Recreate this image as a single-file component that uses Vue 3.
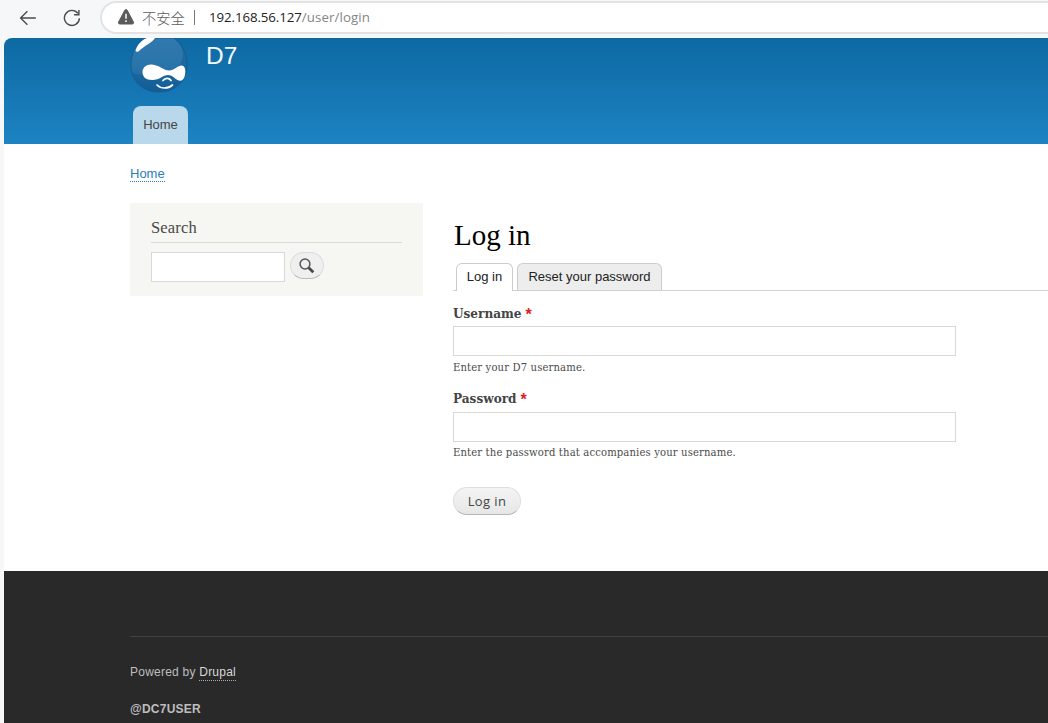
<script setup>
import { ref } from 'vue'

const search = ref('')
const fields = ref([
  { id: 'username', label: 'Username', type: 'text', hint: 'Enter your D7 username.', value: '' },
  { id: 'password', label: 'Password', type: 'password', hint: 'Enter the password that accompanies your username.', value: '' },
])
</script>

<template>
  <div class="window">
    <div class="toolbar">
      <svg class="back" width="18" height="18" viewBox="0 0 18 18">
        <path d="M16.8 9H1.6M8.4 2.3L1.6 9l6.8 6.7" />
      </svg>
      <svg class="reload" width="18" height="18" viewBox="0 0 18 18">
        <path d="M16.4 9.2A7.5 7.5 0 1 1 14.9 4.4M15.9 1v4.7h-4.8" />
      </svg>
      <div class="address">
        <svg class="warn" width="18" height="16" viewBox="0 0 18 16">
          <path d="M7.9 1.1Q9 .1 10.100 1.100L16.500 13.200Q16.800 15 15.300 15H2.700Q1.200 15 1.500 13.200Z" fill="#5b5b5b" stroke="#5b5b5b" />
          <path d="M9 4.700v5M9 11.300v1.700" stroke="#fff" stroke-width="1.500" />
        </svg>
        <span class="insecure">不安全</span>
        <span class="divider"></span>
        <span class="host">192.168.56.127</span><span class="path">/user/login</span>
      </div>
    </div>

    <div class="page">
      <header class="header">
        <div class="brand">
          <svg class="logo" width="58" height="56" viewBox="0 0 58 56">
            <defs>
              <linearGradient id="drop" x1="0" y1="0" x2="0" y2="1">
                <stop offset="0" stop-color="#3179ae" />
                <stop offset=".55" stop-color="#2874aa" />
                <stop offset="1" stop-color="#145f98" />
              </linearGradient>
            </defs>
            <path d="M15 0H44C52 6 57 15 57 27C57 43 45 54 29 54S1 43 1 27C1 15 6 6 15 0Z" fill="url(#drop)" stroke="#165e95" />
            <path d="M45 1C57 11 54 24 46 31C34 42 15 38 2 35C6 48 16 54 29 54C45 54 57 43 57 27C57 15 52 6 45 1Z" fill="#115c94" opacity=".5" />
            <path d="M6 11C8 6 12 2 17 0H25C22 5 15 7 9 13C6 15 5 13 6 11Z" fill="#fff" />
            <path d="M12.500 34C12.500 29 17 26 22 26.500C29 27 34 32.500 39 32.500C44 32.500 48 27.500 51.500 27.500C55 27.500 56 32 55 37C54 42 51 44 47.500 42C44 40 42 37 38 37C33 37 30 42 22 42C16 42 12.500 39 12.500 34Z" fill="#fff" />
            <path d="M33 42.500C35 40 39 39.500 41 42.500M27 47C31 51 38 51 42.500 47" fill="none" stroke="#fff" stroke-width="1.700" stroke-linecap="round" />
          </svg>
          <span class="site">D7</span>
        </div>
        <nav><a class="menu-tab">Home</a></nav>
      </header>

      <div class="breadcrumb"><a>Home</a></div>

      <main class="columns">
        <aside class="search">
          <h2><span>Search</span></h2>
          <div class="search-row">
            <input v-model="search" type="text" />
            <button aria-label="Search">
              <svg width="16" height="16" viewBox="0 0 16 16">
                <circle cx="6" cy="6" r="4.900" fill="none" stroke="#555" stroke-width="1.500" />
                <path d="M9.700 9.700L14.300 14.300" stroke="#484848" stroke-width="2.800" />
              </svg>
            </button>
          </div>
        </aside>

        <section class="content">
          <h1><span>Log in</span></h1>
          <div class="tabs">
            <a class="tab active">Log in</a>
            <a class="tab">Reset your password</a>
          </div>
          <form @submit.prevent>
            <div v-for="f in fields" :key="f.id" class="field" :class="f.id">
              <label :for="f.id"><span class="name">{{ f.label }}</span><span class="star">*</span></label>
              <input :id="f.id" v-model="f.value" :type="f.type" />
              <div class="hint">{{ f.hint }}</div>
            </div>
            <button class="submit">Log in</button>
          </form>
        </section>
      </main>

      <footer class="footer">
        <div class="credits">
          <p>Powered by <a>Drupal</a></p>
          <p class="owner">@DC7USER</p>
        </div>
      </footer>
    </div>
  </div>
</template>

<style>
html,
body {
  margin: 0;
  overflow: hidden;
}
</style>

<style scoped>
* {
  box-sizing: border-box;
}
.window {
  width: 1048px;
  height: 723px;
  overflow: hidden;
  background: #f6f7f8;
  font-family: "Liberation Sans", Arial, sans-serif;
  display: flex;
  flex-direction: column;
}
.toolbar {
  height: 38px;
  flex: none;
  display: flex;
  align-items: flex-start;
  padding-left: 19px;
}
.toolbar > svg {
  fill: none;
  stroke: #4b4b4b;
  stroke-width: 1.4;
  margin-top: 9px;
}
.reload {
  margin-left: 26px;
}
.address {
  flex: 1;
  height: 33px;
  margin: 1px 0 0 19px;
  border: 2px solid #e3e3e4;
  border-right: 0;
  border-radius: 17px 0 0 17px;
  background: #fff;
  display: flex;
  align-items: center;
  padding: 0 0 1px 15px;
  font-family: "Open Sans", "Noto Sans CJK SC", sans-serif;
  font-size: 13.3px;
  white-space: nowrap;
}
.warn {
  flex: none;
}
.insecure {
  font-family: "Noto Sans CJK SC", sans-serif;
  font-size: 14.3px;
  font-weight: 300;
  color: #5c5c5c;
  margin-left: 7px;
  width: 43px;
}
.divider {
  width: 1px;
  height: 15px;
  background: #777;
  margin: 0 14px 0 9px;
}
.host {
  color: #222;
  letter-spacing: -0.1px;
}
.path {
  color: #858585;
  letter-spacing: 0.1px;
}
.page {
  flex: 1;
  margin-left: 4px;
  background: #fff;
  border-radius: 8px 0 0 0;
  overflow: hidden;
  display: flex;
  flex-direction: column;
}
.header {
  height: 106px;
  flex: none;
  background: linear-gradient(#0d69a2, #1d83c3);
  padding-left: 126px;
  display: flex;
  flex-direction: column;
  justify-content: space-between;
}
.brand {
  display: flex;
  height: 56px;
}
.site {
  font-size: 24.5px;
  line-height: 28px;
  color: #f4faff;
  margin: 4px 0 0 18px;
}
.menu-tab {
  display: block;
  width: 55px;
  height: 38px;
  margin-left: 3px;
  border-radius: 8px 8px 0 0;
  background: #bad8eb;
  color: #444;
  font-size: 13px;
  line-height: 37px;
  text-align: center;
}
.breadcrumb {
  height: 59px;
  flex: none;
  padding: 22px 0 0 126px;
  font-size: 13px;
  line-height: 15px;
}
.breadcrumb a {
  display: inline-block;
  color: #2880b9;
  border-bottom: 1px dotted #2880b9;
}
.columns {
  height: 368px;
  flex: none;
  display: flex;
  align-items: flex-start;
  padding-left: 126px;
}
.search {
  width: 293px;
  height: 93px;
  background: #f6f6f2;
  padding: 12px 21px 0;
}
h1,
h2,
label,
.hint {
  font-family: "DejaVu Serif Condensed", "DejaVu Serif", Georgia, serif;
  font-weight: normal;
  margin: 0;
}
.search h2 {
  height: 28px;
  border-bottom: 1px solid #d9dad6;
  color: #484848;
  font-family: "Liberation Serif", serif;
  font-size: 16.5px;
  line-height: 25px;
  letter-spacing: 0.15px;
}
.search-row {
  display: flex;
  margin-top: 9px;
}
input {
  display: block;
  border: 1px solid #d8d8d8;
  background: #fff;
  outline: none;
  padding: 4px;
}
.search-row input {
  width: 134px;
  height: 30px;
}
.search-row button {
  width: 34px;
  height: 27px;
  margin-left: 5px;
  border: 1px solid #dcdcdc;
  border-bottom-color: #bdbdbd;
  border-radius: 14px;
  background: #efefef;
  padding: 0;
  display: flex;
  align-items: center;
  justify-content: center;
}
.content {
  flex: 1;
  margin-left: 30px;
  padding-top: 14px;
}
h1 {
  height: 46px;
  color: #000;
  font-family: "Liberation Serif", serif;
  font-size: 29px;
  line-height: 37px;
  letter-spacing: 0;
  padding-left: 1px;
}
.tabs {
  display: flex;
  height: 28px;
  padding-left: 3px;
  gap: 4px;
  border-bottom: 1px solid #d2d2d2;
}
.tab {
  height: 27px;
  width: 145px;
  border: 1px solid #ccc;
  border-bottom: 0;
  border-radius: 6px 6px 0 0;
  background: #ededed;
  color: #222;
  font-size: 13px;
  line-height: 25px;
  text-align: center;
}
.active {
  width: 57px;
  height: 28px;
  background: #fff;
}
form {
  padding-top: 15px;
}
.field {
  height: 85px;
}
label {
  display: flex;
  height: 20px;
  font-family: "DejaVu Serif", Georgia, serif;
  font-size: 12.1px;
  font-weight: bold;
  line-height: 17px;
  color: #444;
}
.star {
  color: #e01d1d;
  margin-left: 4px;
  font-family: "Liberation Sans", sans-serif;
  font-size: 16px;
}
.field input {
  width: 503px;
  height: 30px;
}
.password input {
  margin-top: 1px;
}
.hint {
  font-size: 11.2px;
  line-height: 15px;
  letter-spacing: 0.13px;
  margin-top: 4px;
  color: #4b4b4b;
  white-space: nowrap;
}
.password .hint {
  margin-top: 3px;
}
.submit {
  display: block;
  width: 68px;
  height: 28px;
  margin-top: 11px;
  border: 1px solid #dedede;
  border-bottom-color: #b5b5b5;
  border-radius: 14px;
  background: linear-gradient(#f4f4f4, #e7e7e7);
  padding: 0;
  color: #444;
  font-family: "Open Sans", sans-serif;
  font-size: 13px;
  letter-spacing: 0.4px;
  line-height: 24px;
}
.footer {
  flex: 1;
  background: #292929;
  padding: 65px 0 0 126px;
}
.credits {
  border-top: 1px solid #404040;
  padding-top: 28px;
  font-size: 12px;
  letter-spacing: 0.23px;
  line-height: 15px;
  color: #bebebe;
}
p {
  margin: 0 0 21px;
}
p a {
  display: inline-block;
  color: #d8d8d8;
  border-bottom: 1px dotted #aaa;
}
.owner {
  font-weight: bold;
}
</style>
